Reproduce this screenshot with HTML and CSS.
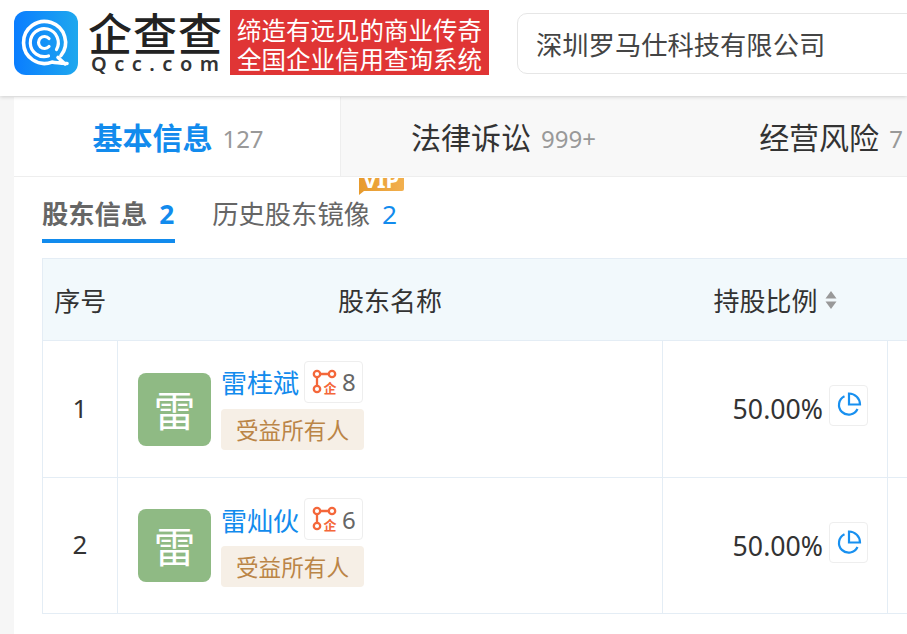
FILE: index.html
```html
<!DOCTYPE html>
<html lang="zh-CN">
<head>
<meta charset="utf-8">
<title>股东信息</title>
<link rel="stylesheet" href="styles.css">
</head>
<body>
<header class="header">
  <svg class="logo-icon" width="64" height="64" viewBox="0 0 64 64">
    <defs><linearGradient id="lg" x1="0" y1="0" x2="1" y2="0"><stop offset="0" stop-color="#0a7dff"/><stop offset="1" stop-color="#1fa8ee"/></linearGradient></defs>
    <rect width="64" height="64" rx="12" fill="url(#lg)"/>
    <g fill="none" stroke="#fff" stroke-linecap="round">
      <path d="M47 44.500A21 21 0 1 0 38 51.100Q42 52 53 52.500M44 46.500L51 53" stroke-width="3.600"/>
      <path d="M42.500 38.500A14 14 0 1 0 34.500 45" stroke-width="3.200"/>
      <path d="M35 27.500A6 6 0 1 0 35 35.500" stroke-width="3.200"/>
    </g>
  </svg>
  <div class="brand">
    <div class="brand-name">企查查</div>
    <div class="brand-url">Qcc.com</div>
  </div>
  <div class="slogan">缔造有远见的商业传奇<br>全国企业信用查询系统</div>
  <div class="search">深圳罗马仕科技有限公司</div>
</header>
<main class="card">
  <nav class="tabs">
    <div class="tab tab-active">基本信息<span class="tab-count">127</span></div>
    <div class="tab tab-second">法律诉讼<span class="tab-count">999+</span></div>
    <div class="tab">经营风险<span class="tab-count">7</span></div>
  </nav>
  <section class="content">
    <div class="subtabs">
      <div class="subtab subtab-active">股东信息<span class="subtab-num">2</span></div>
      <div class="subtab">历史股东镜像<span class="subtab-num">2</span>
        <svg class="vip" width="45" height="17" viewBox="0 0 45 17"><defs><linearGradient id="vg" x1="0" y1="0" x2="1" y2="0"><stop offset="0" stop-color="#e79a2c"/><stop offset="1" stop-color="#f2b04f"/></linearGradient></defs><path d="M0 0H45V11Q45 13 43 13H5L0 17Z" fill="url(#vg)"/><text x="22" y="9.500" text-anchor="middle" class="vip-text">VIP</text></svg>
      </div>
    </div>
    <table class="grid">
      <colgroup><col class="c1"><col class="c2"><col class="c3"><col></colgroup>
      <thead>
        <tr><th>序号</th><th>股东名称</th><th><span class="sort">持股比例<svg width="12" height="22" viewBox="0 0 12 22"><path d="M6 2L11.500 9.500H.5Z M6 20L.5 12.500H11.500Z" fill="#999"/></svg></span></th><th></th></tr>
      </thead>
      <tbody>
        <tr class="row-a">
          <td class="num">1</td>
          <td><div class="person">
            <div class="avatar">雷</div>
            <div class="info">
              <div class="name-line"><a class="name">雷桂斌</a><span class="rel"><svg class="rel-icon" width="26" height="26" viewBox="0 0 26 26"><g fill="none" stroke="#f4673a" stroke-width="2.300"><circle cx="5" cy="5" r="3.200"/><circle cx="20" cy="5" r="3.200"/><circle cx="5" cy="20" r="3.200"/><path d="M8.200 5H16.800M5 8.200V16.800"/></g><text x="18" y="24" text-anchor="middle" class="rel-text">企</text></svg>8</span></div>
              <div class="chip">受益所有人</div>
            </div>
          </div></td>
          <td class="pct"><span>50.00%</span><span class="pie"><svg width="26" height="26" viewBox="0 0 26 26"><g fill="none" stroke="#1890f0" stroke-width="2.200"><path d="M8.500 4.200A9.700 9.700 0 1 0 21.500 17"/><path d="M13 1.500A11 11 0 0 1 24 12.500H13Z"/></g></svg></span></td>
          <td></td>
        </tr>
        <tr class="row-b">
          <td class="num">2</td>
          <td><div class="person">
            <div class="avatar">雷</div>
            <div class="info">
              <div class="name-line"><a class="name">雷灿伙</a><span class="rel"><svg class="rel-icon" width="26" height="26" viewBox="0 0 26 26"><g fill="none" stroke="#f4673a" stroke-width="2.300"><circle cx="5" cy="5" r="3.200"/><circle cx="20" cy="5" r="3.200"/><circle cx="5" cy="20" r="3.200"/><path d="M8.200 5H16.800M5 8.200V16.800"/></g><text x="18" y="24" text-anchor="middle" class="rel-text">企</text></svg>6</span></div>
              <div class="chip">受益所有人</div>
            </div>
          </div></td>
          <td class="pct"><span>50.00%</span><span class="pie"><svg width="26" height="26" viewBox="0 0 26 26"><g fill="none" stroke="#1890f0" stroke-width="2.200"><path d="M8.500 4.200A9.700 9.700 0 1 0 21.500 17"/><path d="M13 1.500A11 11 0 0 1 24 12.500H13Z"/></g></svg></span></td>
          <td></td>
        </tr>
      </tbody>
    </table>
  </section>
</main>
</body>
</html>
```
FILE: styles.css
```css
* { box-sizing: border-box; }
html, body { margin: 0; height: 100%; }
body {
  width: 907px;
  height: 634px;
  overflow: hidden;
  background: #f6f6f6;
  color: #333;
  font-family: "Noto Sans", "Noto Sans CJK SC", sans-serif;
}
.header {
  height: 96px;
  background: #fff;
  box-shadow: 0 1px 4px rgba(0,0,0,.16);
  display: flex;
  align-items: flex-start;
  padding: 11px 0 0 14px;
  position: relative;
  z-index: 1;
}
.logo-icon { flex: none; }
.brand { width: 134px; margin-left: 10px; flex: none; margin-top: -1px; }
.brand-name {
  font-family: "Noto Sans CJK SC", sans-serif;
  font-size: 44px;
  font-weight: 500;
  line-height: 44px;
  height: 44px;
  color: #222;
  white-space: nowrap;
  letter-spacing: 1px;
}
.brand-url {
  font-size: 20px;
  line-height: 20px;
  letter-spacing: 7.500px;
  margin-left: 3px;
  color: #333;
  font-weight: 600;
  white-space: nowrap;
}
.slogan {
  flex: none;
  margin: -1px 0 0 8px;
  width: 259px;
  height: 65px;
  background: #e03535;
  color: #fff;
  font-family: "Noto Sans CJK SC", sans-serif;
  font-size: 24.500px;
  line-height: 28.500px;
  padding: 6px 0 0 7px;
  white-space: nowrap;
}
.search {
  flex: none;
  margin: 2px 0 0 28px;
  width: 500px;
  height: 61px;
  border: 1px solid #e6e6e6;
  border-radius: 10px;
  padding-left: 18px;
  font-family: "Noto Sans CJK SC", sans-serif;
  font-size: 26.300px;
  line-height: 59px;
  color: #444;
  white-space: nowrap;
}
.card {
  margin-left: 14px;
  margin-top: 1px;
  height: 537px;
  background: #fff;
  position: relative;
  overflow: hidden;
}
.tabs { display: flex; height: 80px; width: 1000px; }
.tab {
  flex: none;
  width: 326px;
  height: 80px;
  padding-bottom: 2px;
  display: flex;
  align-items: center;
  justify-content: center;
  background: #f8f8f8;
  border-bottom: 1px solid #eee;
  font-family: "Noto Sans CJK SC", sans-serif;
  font-size: 30px;
  color: #333;
  white-space: nowrap;
}
.tab:last-child { width: 330px; }
.tab-second { border-left: 1px solid #eee; }
.tab-active {
  background: #fff;
  color: #128bed;
  font-weight: 700;
  padding-left: 2px;
}
.tab-count {
  font-family: "Noto Sans", sans-serif;
  font-size: 24px;
  font-weight: 400;
  color: #999;
  margin-left: 10px;
  padding-top: 6px;
}
.content { padding: 0 0 0 28px; }
.subtabs { display: flex; gap: 37px; height: 81px; }
.subtab {
  position: relative;
  height: 66px;
  padding-top: 15px;
  font-family: "Noto Sans CJK SC", sans-serif;
  font-size: 26.300px;
  line-height: 42px;
  color: #666;
  white-space: nowrap;
}
.subtab-active {
  font-weight: 700;
  border-bottom: 4px solid #128bed;
  padding-right: 1px;
}
.subtab-num {
  font-family: "Noto Sans", sans-serif;
  color: #128bed;
  margin-left: 12px;
}
.vip { position: absolute; left: 147px; top: 1px; }
.vip-text { font: 700 22px "Noto Sans", sans-serif; fill: #fff; }
.grid {
  table-layout: fixed;
  width: 1000px;
  border-collapse: collapse;
  font-family: "Noto Sans CJK SC", sans-serif;
  font-size: 26px;
  color: #333;
}
.c1 { width: 75px; }
.c2 { width: 545px; }
.c3 { width: 225px; }
.grid th, .grid td { border: 1px solid #e4edf5; padding: 0; }
.grid thead tr { height: 82px; }
.grid th { background: #f2f9fc; font-weight: 400; }
.grid th + th { border-left: 0; border-right: 0; }
.grid th:first-child { border-right: 0; }
.row-a { height: 137px; }
.row-b { height: 136px; }
.num { text-align: center; font-family: "Noto Sans", sans-serif; padding-bottom: 3px !important; }
.sort { display: inline-flex; align-items: center; gap: 7px; }
.person { display: flex; padding-left: 20px; align-items: center; gap: 10px; }
.avatar {
  width: 73px;
  height: 73px;
  border-radius: 8px;
  background: #8fba84;
  color: #fff;
  font-size: 42px;
  line-height: 71px;
  text-align: center;
  flex: none;
}
.info { display: flex; flex-direction: column; gap: 6px; margin-bottom: 8px; }
.row-b .info { margin-bottom: 6px; }
.name-line { display: flex; align-items: center; gap: 5px; height: 42px; }
.name { color: #128bed; }
.rel {
  display: inline-flex;
  align-items: center;
  gap: 4px;
  height: 42px;
  padding: 0 6px 0 7px;
  border: 1px solid #eee;
  border-radius: 4px;
  color: #666;
  font-family: "Noto Sans", sans-serif;
  font-size: 24px;
}
.rel-icon { overflow: visible; }
.rel-text { font: 700 13px "Noto Sans CJK SC", sans-serif; fill: #f4673a; }
.chip {
  width: 143px;
  height: 41px;
  border-radius: 4px;
  background: #f6efe6;
  color: #bb8547;
  font-size: 22.600px;
  line-height: 41px;
  text-align: center;
}
.pct {
  font-family: "Noto Sans", sans-serif;
  font-size: 26.700px;
  text-align: right;
  padding-right: 19px !important;
  padding-bottom: 1px !important;
}
.pct > span { vertical-align: middle; }
.pie {
  display: inline-flex;
  align-items: center;
  justify-content: center;
  width: 39px;
  height: 41px;
  margin-left: 6px;
  border: 1px solid #eee;
  border-radius: 4px;
  position: relative;
  top: -4px;
}
.row-b .pie { top: -3px; }
```
